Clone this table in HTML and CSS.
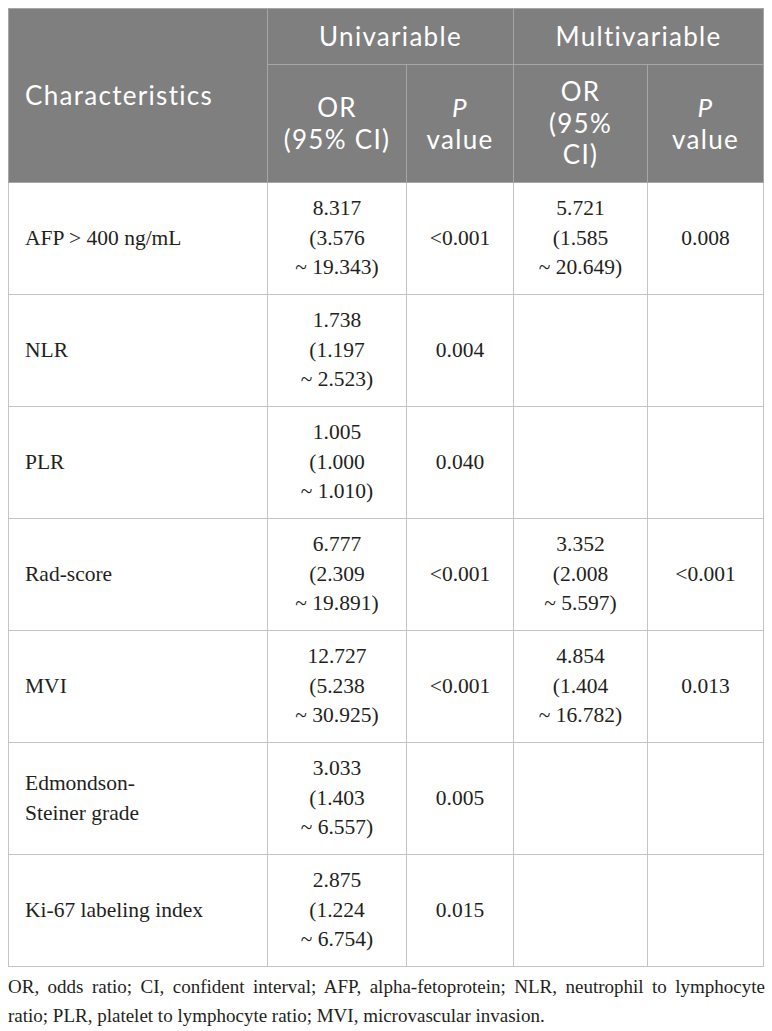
FILE: index.html
```html
<!DOCTYPE html>
<html>
<head>
<meta charset="utf-8">
<link rel="stylesheet" href="styles.css">
</head>
<body>
<table class="tbl">
  <colgroup>
    <col class="c1"><col class="c2"><col class="c3"><col class="c4"><col class="c5">
  </colgroup>
  <thead>
    <tr class="h1">
      <th rowspan="2" class="first">Characteristics</th>
      <th colspan="2">Univariable</th>
      <th colspan="2">Multivariable</th>
    </tr>
    <tr class="h2">
      <th>OR<br>(95% CI)</th>
      <th><i>P</i><br>value</th>
      <th>OR<br>(95%<br>CI)</th>
      <th><i>P</i><br>value</th>
    </tr>
  </thead>
  <tbody>
    <tr><td class="first">AFP &gt; 400 ng/mL</td><td>8.317<br>(3.576<br>~ 19.343)</td><td>&lt;0.001</td><td>5.721<br>(1.585<br>~ 20.649)</td><td>0.008</td></tr>
    <tr><td class="first">NLR</td><td>1.738<br>(1.197<br>~ 2.523)</td><td>0.004</td><td></td><td></td></tr>
    <tr><td class="first">PLR</td><td>1.005<br>(1.000<br>~ 1.010)</td><td>0.040</td><td></td><td></td></tr>
    <tr><td class="first">Rad-score</td><td>6.777<br>(2.309<br>~ 19.891)</td><td>&lt;0.001</td><td>3.352<br>(2.008<br>~ 5.597)</td><td>&lt;0.001</td></tr>
    <tr><td class="first">MVI</td><td>12.727<br>(5.238<br>~ 30.925)</td><td>&lt;0.001</td><td>4.854<br>(1.404<br>~ 16.782)</td><td>0.013</td></tr>
    <tr><td class="first">Edmondson-<br>Steiner grade</td><td>3.033<br>(1.403<br>~ 6.557)</td><td>0.005</td><td></td><td></td></tr>
    <tr><td class="first">Ki-67 labeling index</td><td>2.875<br>(1.224<br>~ 6.754)</td><td>0.015</td><td></td><td></td></tr>
  </tbody>
</table>
<p class="note">OR, odds ratio; CI, confident interval; AFP, alpha-fetoprotein; NLR, neutrophil to lymphocyte ratio; PLR, platelet to lymphocyte ratio; MVI, microvascular invasion.</p>
</body>
</html>
```
FILE: styles.css
```css
html, body { background: #ffffff; }
body {
  margin: 8px 7px 8px 8px;
  color: #231f20;
}
.tbl {
  width: 755px;
  border-collapse: collapse;
  table-layout: fixed;
}
.c1 { width: 259px; }
.c2 { width: 139px; }
.c3 { width: 107px; }
.c4 { width: 134px; }
.c5 { width: 116px; }
.tbl th {
  background: #7f7f7f;
  color: #ffffff;
  font-family: "Lato", "Open Sans", sans-serif;
  font-weight: 400;
  font-size: 26px;
  line-height: 31.5px;
  letter-spacing: 1.3px;
  text-align: center;
  vertical-align: middle;
  border: 1.5px solid #a6a6a6;
  padding: 0 2px;
}
.tbl th i { font-style: italic; }
.tbl th.first { text-align: left; padding-left: 16px; }
.h1 th { height: 55px; }
.h2 th { height: 117px; }
.tbl td {
  font-family: "Liberation Serif", "Times New Roman", serif;
  font-size: 21.5px;
  line-height: 29.5px;
  text-align: center;
  vertical-align: middle;
  border: 1.5px solid #c4c4c4;
  height: 111px;
  padding: 0 4px;
  color: #231f20;
}
.tbl td.first { text-align: left; padding-left: 16px; }
.note {
  font-family: "Liberation Serif", "Times New Roman", serif;
  font-size: 19px;
  line-height: 29px;
  text-align: justify;
  margin: 5px 0 0;
  width: 757px;
  color: #231f20;
}
```
